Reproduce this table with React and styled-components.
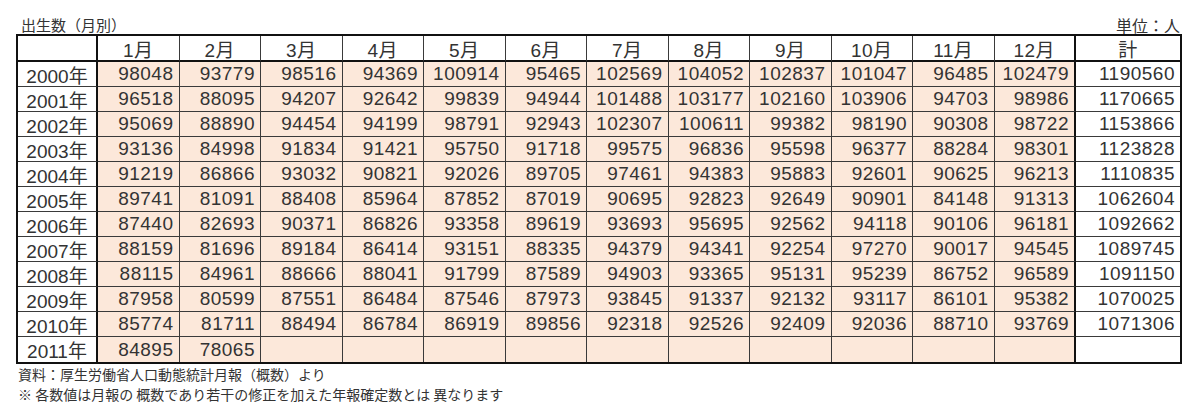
import React from "react";
import styled, { createGlobalStyle } from "styled-components";

const GlobalStyle = createGlobalStyle`
  html, body {
    margin: 0;
    padding: 0;
    background: #ffffff;
  }
  body {
    font-family: "Liberation Sans", "Noto Sans CJK JP", sans-serif;
    color: #333333;
  }
`;

const months = ["1月", "2月", "3月", "4月", "5月", "6月", "7月", "8月", "9月", "10月", "11月", "12月"];

const rows = [
  ["2000年", [98048, 93779, 98516, 94369, 100914, 95465, 102569, 104052, 102837, 101047, 96485, 102479], 1190560],
  ["2001年", [96518, 88095, 94207, 92642, 99839, 94944, 101488, 103177, 102160, 103906, 94703, 98986], 1170665],
  ["2002年", [95069, 88890, 94454, 94199, 98791, 92943, 102307, 100611, 99382, 98190, 90308, 98722], 1153866],
  ["2003年", [93136, 84998, 91834, 91421, 95750, 91718, 99575, 96836, 95598, 96377, 88284, 98301], 1123828],
  ["2004年", [91219, 86866, 93032, 90821, 92026, 89705, 97461, 94383, 95883, 92601, 90625, 96213], 1110835],
  ["2005年", [89741, 81091, 88408, 85964, 87852, 87019, 90695, 92823, 92649, 90901, 84148, 91313], 1062604],
  ["2006年", [87440, 82693, 90371, 86826, 93358, 89619, 93693, 95695, 92562, 94118, 90106, 96181], 1092662],
  ["2007年", [88159, 81696, 89184, 86414, 93151, 88335, 94379, 94341, 92254, 97270, 90017, 94545], 1089745],
  ["2008年", [88115, 84961, 88666, 88041, 91799, 87589, 94903, 93365, 95131, 95239, 86752, 96589], 1091150],
  ["2009年", [87958, 80599, 87551, 86484, 87546, 87973, 93845, 91337, 92132, 93117, 86101, 95382], 1070025],
  ["2010年", [85774, 81711, 88494, 86784, 86919, 89856, 92318, 92526, 92409, 92036, 88710, 93769], 1071306],
  ["2011年", [84895, 78065, "", "", "", "", "", "", "", "", "", ""], ""],
];

const Page = styled.div`
  width: 1200px;
  padding: 0 18px 0 16px;
  box-sizing: border-box;
`;

const Caption = styled.div`
  display: flex;
  justify-content: space-between;
  align-items: flex-end;
  height: 34px;
  font-family: "Noto Sans CJK JP", sans-serif;
  line-height: 18px;
  color: #333;
  padding: 0 2px 0 5px;
`;

const CaptionText = styled.span`
  font-size: ${(p) => p.$size};
`;

const Grid = styled.div`
  display: grid;
  grid-template-columns: 80px repeat(12, 1fr) 104px;
  grid-template-rows: 26px repeat(12, 25px);
  border: 2px solid #111;
  width: 1166px;
  box-sizing: border-box;
`;

const Cell = styled.div`
  display: flex;
  align-items: center;
  justify-content: ${(p) => (p.$align === "right" ? "flex-end" : "center")};
  padding-right: ${(p) => (p.$align === "right" ? "5px" : "0")};
  background: ${(p) => (p.$fill ? "#fce8da" : "#ffffff")};
  border-right: ${(p) => (p.$last ? "none" : p.$thick ? "2px solid #111" : "1px solid #3a3a3a")};
  border-bottom: ${(p) => (p.$bottom ? "none" : p.$head ? "2px solid #111" : "1px solid #3a3a3a")};
  font-size: 19px;
  letter-spacing: ${(p) => (p.$year ? "0" : "0.5px")};
  color: #333;
  white-space: nowrap;
  overflow: hidden;
`;

const Notes = styled.div`
  padding: 0 0 0 2px;
  font-family: "Noto Sans CJK JP", sans-serif;
  font-size: 14px;
  line-height: 20px;
  color: #333;
`;

export default function App() {
  return (
    <>
      <GlobalStyle />
      <Page>
        <Caption>
          <CaptionText $size="15px">出生数（月別）</CaptionText>
          <CaptionText $size="16px">単位：人</CaptionText>
        </Caption>
        <Grid>
          <Cell $head $thick />
          {months.map((m) => (
            <Cell key={m} $head $thick={m === "12月"}>
              {m}
            </Cell>
          ))}
          <Cell $head $last>
            計
          </Cell>
          {rows.map(([year, values, total], i) => {
            const bottom = i === rows.length - 1;
            return (
              <React.Fragment key={year}>
                <Cell $thick $year $bottom={bottom}>
                  {year}
                </Cell>
                {values.map((v, j) => (
                  <Cell key={j} $fill $align="right" $thick={j === 11} $bottom={bottom}>
                    {v}
                  </Cell>
                ))}
                <Cell $align="right" $last $bottom={bottom}>
                  {total}
                </Cell>
              </React.Fragment>
            );
          })}
        </Grid>
        <Notes>
          <div>資料：厚生労働省人口動態統計月報（概数）より</div>
          <div>※ 各数値は月報の 概数であり若干の修正を加えた年報確定数とは 異なります</div>
        </Notes>
      </Page>
    </>
  );
}
